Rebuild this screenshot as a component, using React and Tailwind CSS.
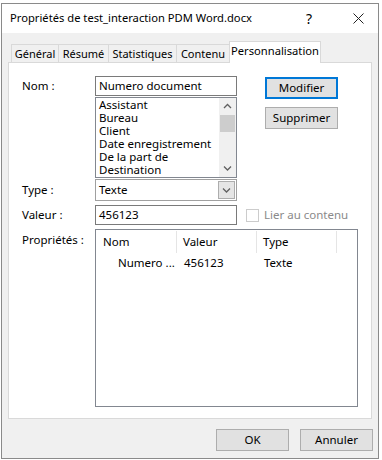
import React from "react";

const font = { fontFamily: '"Noto Sans", "Open Sans", sans-serif' };

function Chevron({ dir = "down", className = "" }) {
  const d = dir === "up" ? "M1 5 L4.5 1.5 L8 5" : "M1 1.5 L4.5 5 L8 1.5";
  return (
    <svg width="9" height="7" viewBox="0 0 9 7" className={className}>
      <path d={d} fill="none" stroke="#606060" strokeWidth="1.3" />
    </svg>
  );
}

function Button({ children, primary }) {
  return (
    <div
      className={
        "flex items-center justify-center w-[73px] h-[22px] bg-[#e1e1e1] text-black " +
        (primary ? "border-2 border-[#0078d7]" : "border border-[#adadad]")
      }
    >
      {children}
    </div>
  );
}

const items = ["Assistant", "Bureau", "Client", "Date enregistrement", "De la part de", "Destination"];
const tabs = [
  { label: "Général", w: "w-[47px]" },
  { label: "Résumé", w: "w-[50px]" },
  { label: "Statistiques", w: "w-[68px]" },
  { label: "Contenu", w: "w-[53px]" },
];

export default function App() {
  return (
    <div className="w-[382px] h-[460px] bg-white pt-[3px] pl-[1px] overflow-hidden" style={font}>
      <div className="w-[378px] h-[456px] border border-[#8a8a8a] bg-[#f0f0f0] flex flex-col text-[11.5px] text-black">
        {/* title bar */}
        <div className="h-[29px] bg-white flex items-center shrink-0">
          <span className="pl-[8px] flex-1 whitespace-nowrap text-[11.2px]">Propriétés de test_interaction PDM Word.docx</span>
          <span className="w-[20px] text-center text-[14px] mr-[34px]">?</span>
          <svg width="11" height="11" viewBox="0 0 11 11" className="mr-[14px]">
            <path d="M0.5 0.5 L10.5 10.5 M10.5 0.5 L0.5 10.5" stroke="#222" strokeWidth="1" />
          </svg>
        </div>

        {/* tabs */}
        <div className="flex items-end pl-[9px] pt-[7px] h-[29px] shrink-0 whitespace-nowrap text-[11px]">
          {tabs.map((t) => (
            <div
              key={t.label}
              className={t.w + " h-[19px] flex items-center justify-center border-t border-l border-[#d9d9d9] last:border-r bg-[#f0f0f0] -mb-px"}
            >
              {t.label}
            </div>
          ))}
          <div className="w-[92px] h-[22px] flex justify-center pt-[1px] border-t border-l border-r border-[#d9d9d9] bg-white relative z-10 -mb-px text-[11.2px]">
            Personnalisation
          </div>
        </div>

        {/* panel */}
        <div className="mx-[6px] h-[357px] bg-white border border-[#d9d9d9] pl-[13px] pt-[13px] flex flex-col shrink-0">
          {/* Nom row */}
          <div className="flex">
            <div className="w-[73px] h-[20px] flex items-center">Nom :</div>
            <div className="w-[142px] flex flex-col">
              <div className="h-[20px] border border-[#7a7a7a] px-[3px] flex items-center whitespace-nowrap">Numero document</div>
              <div className="mt-px h-[81px] border border-[#828790] flex">
                <div className="flex-1 pl-[3px] overflow-hidden whitespace-nowrap">
                  {items.map((i) => (
                    <div key={i} className="h-[13px] leading-[13px]">{i}</div>
                  ))}
                </div>
                <div className="w-[17px] bg-[#f0f0f0] flex flex-col items-center">
                  <Chevron dir="up" className="mt-[5px]" />
                  <div className="mt-[5px] w-[15px] h-[17px] bg-[#cdcdcd]" />
                  <div className="flex-1" />
                  <Chevron className="mb-[5px]" />
                </div>
              </div>
            </div>
            <div className="ml-[28px] mt-px flex flex-col gap-[8px]">
              <Button primary>Modifier</Button>
              <Button>Supprimer</Button>
            </div>
          </div>

          {/* Type row */}
          <div className="flex mt-px">
            <div className="w-[73px] h-[22px] flex items-center">Type :</div>
            <div className="w-[142px] h-[22px] border border-[#a0a0a0] flex items-center pl-[3px] pr-px">
              <span className="flex-1">Texte</span>
              <div className="w-[17px] h-[18px] bg-[#e5e5e5] border border-[#adadad] flex items-center justify-center">
                <Chevron />
              </div>
            </div>
          </div>

          {/* Valeur row */}
          <div className="flex mt-[4px] items-center">
            <div className="w-[73px] h-[20px] flex items-center">Valeur :</div>
            <div className="w-[142px] h-[20px] border border-[#7a7a7a] px-[3px] flex items-center">456123</div>
            <div className="ml-[9px] w-[13px] h-[13px] border border-[#cccccc] bg-white" />
            <span className="ml-[5px] text-[#8a8a8a] whitespace-nowrap">Lier au contenu</span>
          </div>

          {/* Propriétés row */}
          <div className="flex mt-[4px]">
            <div className="w-[73px] pt-[2px]">Propriétés :</div>
            <div className="w-[263px] h-[178px] border border-[#828790] flex flex-col whitespace-nowrap">
              <div className="flex h-[23px] pt-[1px]">
                <div className="w-[81px] pl-[7px] border-r border-[#e5e5e5] flex items-center">Nom</div>
                <div className="w-[80px] pl-[6px] border-r border-[#e5e5e5] flex items-center">Valeur</div>
                <div className="w-[80px] pl-[6px] border-r border-[#e5e5e5] flex items-center">Type</div>
              </div>
              <div className="flex h-[20px] items-center">
                <div className="w-[81px] pl-[22px]">Numero ...</div>
                <div className="w-[80px] pl-[7px]">456123</div>
                <div className="w-[80px] pl-[7px]">Texte</div>
              </div>
            </div>
          </div>
        </div>

        {/* footer buttons */}
        <div className="flex justify-end gap-[11px] pr-[5px] mt-[10px]">
          <Button>OK</Button>
          <Button>Annuler</Button>
        </div>
      </div>
    </div>
  );
}
